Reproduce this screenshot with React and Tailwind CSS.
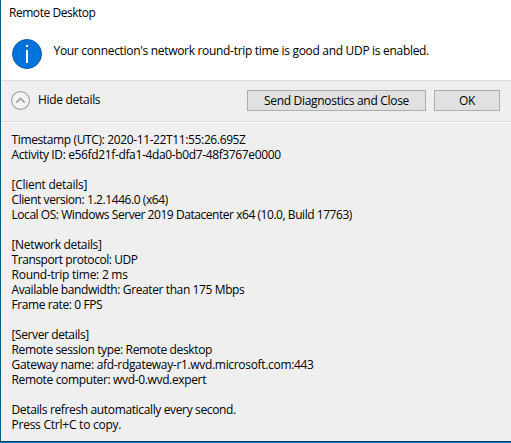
const lines = [
  ['Timestamp (UTC): 2020-11-22T11:55:26.695Z', 'tracking-[-0.37px]'],
  ['Activity ID: e56fd21f-dfa1-4da0-b0d7-48f3767e0000', 'tracking-[-0.36px]'],
  ['', ''],
  ['[Client details]', 'tracking-[-0.26px]'],
  ['Client version: 1.2.1446.0 (x64)', 'tracking-[-0.43px]'],
  ['Local OS: Windows Server 2019 Datacenter x64 (10.0, Build 17763)', 'tracking-[-0.45px]'],
  ['', ''],
  ['[Network details]', 'tracking-[-0.32px]'],
  ['Transport protocol: UDP', 'tracking-[-0.43px]'],
  ['Round-trip time: 2 ms', 'tracking-[-0.25px]'],
  ['Available bandwidth: Greater than 175 Mbps', 'tracking-[-0.39px]'],
  ['Frame rate: 0 FPS', 'tracking-[-0.4px]'],
  ['', ''],
  ['[Server details]', 'tracking-[-0.4px]'],
  ['Remote session type: Remote desktop', 'tracking-[-0.37px]'],
  ['Gateway name: afd-rdgateway-r1.wvd.microsoft.com:443', 'tracking-[-0.32px]'],
  ['Remote computer: wvd-0.wvd.expert', 'tracking-[-0.35px]'],
  ['', ''],
  ['Details refresh automatically every second.', 'tracking-[-0.36px]'],
  ['Press Ctrl+C to copy.', 'tracking-[-0.24px]'],
];

function InfoIcon() {
  return (
    <svg className="block shrink-0" width="30" height="30" viewBox="0 0 30 30">
      <circle cx="15" cy="15" r="14.5" fill="#0072dc" stroke="#0b5ba5" />
      <rect x="14" y="6" width="2" height="2" fill="#fff" />
      <rect x="14" y="11" width="2" height="13" fill="#fff" />
    </svg>
  );
}

function CollapseIcon() {
  return (
    <svg className="block shrink-0" width="19" height="19" viewBox="0 0 19 19" fill="none">
      <circle cx="9.5" cy="9.5" r="8.9" fill="#f3f3f3" stroke="#a0a0a0" strokeWidth="1.1" />
      <path d="M5.3 11.6 9.5 7.4l4.2 4.2" stroke="#a3a3a3" strokeWidth="1.8" />
    </svg>
  );
}

export default function App() {
  return (
    <div className="flex h-[443px] w-[511px] flex-col overflow-hidden whitespace-nowrap bg-[#efefef] font-['Open_Sans','Noto_Sans',sans-serif] text-[12px] leading-[15px] text-black">
      <div className="flex min-h-0 flex-1 flex-col border-l border-[#005a7c]">
        <header className="h-[81px] border-b border-[#dcdcdc] bg-white">
          <div className="pl-2 pt-[5px] tracking-[-0.46px]"><span>Remote Desktop</span></div>
          <div className="flex pl-[11px] pt-[19px]">
            <InfoIcon />
            <p className="ml-[11.5px] mt-[4px] tracking-[-0.31px]">Your connection&#39;s network round-trip time is good and UDP is enabled.</p>
          </div>
        </header>
        <div className="flex h-[41px] shrink-0 items-start border-b border-[#dcdcdc] pr-[11px]">
          <div className="flex flex-1 items-center pl-[10px] pt-[10px]">
            <CollapseIcon />
            <span className="mb-[2px] ml-[8px] tracking-[-0.3px]">Hide details</span>
          </div>
          <button className="mt-[9px] h-[21px] w-[179px] border border-[#adadad] bg-[#e1e1e1] tracking-[-0.31px]">Send Diagnostics and Close</button>
          <button className="ml-[8px] mt-[9px] h-[21px] w-[66px] border border-[#adadad] bg-[#e1e1e1] tracking-[-0.3px]">OK</button>
        </div>
        <main className="flex-1 border-t border-white pl-[10.5px] pt-[9px]">
          {lines.map(([text, tracking], i) => (
            <div key={i} className={`h-[15px] ${tracking}`}>{text}</div>
          ))}
        </main>
      </div>
      <div className="h-[2px] shrink-0 border-t border-[#07406a] bg-[#087bc5]" />
    </div>
  );
}
